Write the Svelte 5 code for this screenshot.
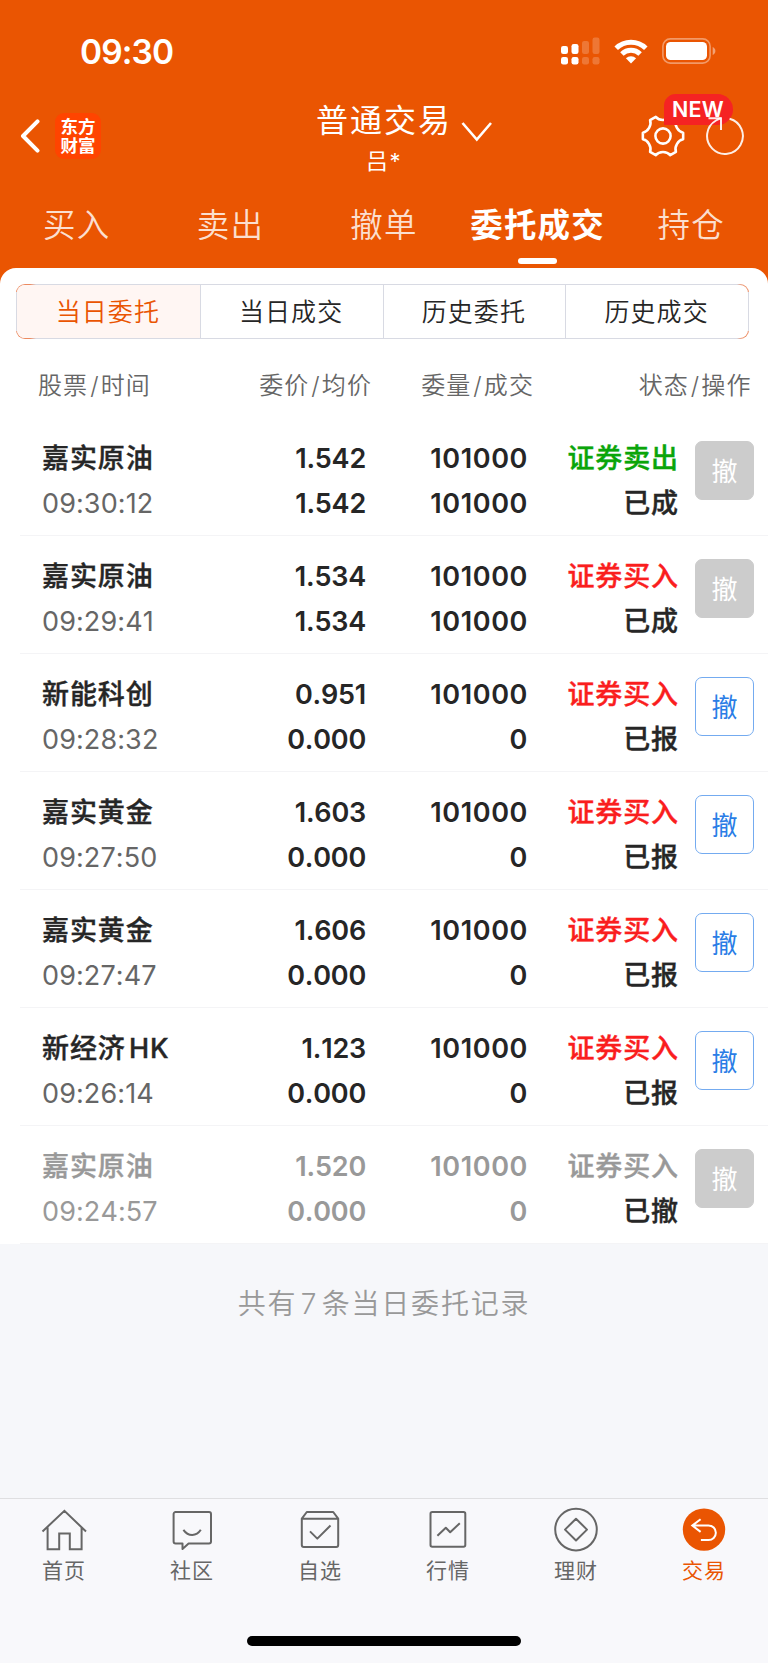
<script lang="ts">
	type Order = {
		name: string;
		time: string;
		price: string;
		avg: string;
		qty: string;
		filled: string;
		side: 'buy' | 'sell';
		status: string;
		open?: boolean;
		cancelled?: boolean;
	};

	const tabs = ['买入', '卖出', '撤单', '委托成交', '持仓'];
	const segments = ['当日委托', '当日成交', '历史委托', '历史成交'];
	const headings = [
		['股票', '时间'],
		['委价', '均价'],
		['委量', '成交'],
		['状态', '操作']
	];

	const orders: Order[] = [
		{ name: '嘉实原油', time: '09:30:12', price: '1.542', avg: '1.542', qty: '101000', filled: '101000', side: 'sell', status: '已成' },
		{ name: '嘉实原油', time: '09:29:41', price: '1.534', avg: '1.534', qty: '101000', filled: '101000', side: 'buy', status: '已成' },
		{ name: '新能科创', time: '09:28:32', price: '0.951', avg: '0.000', qty: '101000', filled: '0', side: 'buy', status: '已报', open: true },
		{ name: '嘉实黄金', time: '09:27:50', price: '1.603', avg: '0.000', qty: '101000', filled: '0', side: 'buy', status: '已报', open: true },
		{ name: '嘉实黄金', time: '09:27:47', price: '1.606', avg: '0.000', qty: '101000', filled: '0', side: 'buy', status: '已报', open: true },
		{ name: '新经济HK', time: '09:26:14', price: '1.123', avg: '0.000', qty: '101000', filled: '0', side: 'buy', status: '已报', open: true },
		{ name: '嘉实原油', time: '09:24:57', price: '1.520', avg: '0.000', qty: '101000', filled: '0', side: 'buy', status: '已撤', cancelled: true }
	];

	const nav = [
		{ id: 'home', label: '首页' },
		{ id: 'community', label: '社区' },
		{ id: 'watchlist', label: '自选' },
		{ id: 'market', label: '行情' },
		{ id: 'wealth', label: '理财' },
		{ id: 'trade', label: '交易' }
	];

	let activeTab = $state('委托成交');
	let activeSegment = $state('当日委托');
	let activeNav = $state('trade');
</script>

<div class="screen">
	<header>
		<div class="status-bar">
			<span class="clock">09:30</span>
			<div class="indicators">
				<svg class="signal" width="39" height="28" viewBox="0 0 39 28" fill="#fff">
					<rect x="0" y="9" width="7" height="8" rx="2.2" />
					<rect x="0" y="20" width="7" height="7.5" rx="2.2" />
					<rect x="10.5" y="7" width="7" height="10" rx="2.2" />
					<rect x="10.5" y="20" width="7" height="7.5" rx="2.2" />
					<g opacity="0.2">
						<rect x="21" y="4" width="7" height="13" rx="2.2" />
						<rect x="21" y="20" width="7" height="7.5" rx="2.2" />
						<rect x="31.5" y="0.5" width="7" height="16.5" rx="2.2" />
						<rect x="31.5" y="20" width="7" height="7.5" rx="2.2" />
					</g>
				</svg>
				<svg class="wifi" width="34" height="25" viewBox="0 0 34 25" fill="none" stroke="#fff" stroke-width="5">
					<path d="M2.2 9.2a21.2 21.2 0 0 1 29.6 0" />
					<path d="M7.9 15a13.2 13.2 0 0 1 18.2 0" />
					<path d="M17 24.5l-5.1-5.2a7.4 7.4 0 0 1 10.2 0z" fill="#fff" stroke="none" />
				</svg>
				<svg class="battery" width="54" height="26" viewBox="0 0 54 26">
					<rect x="0.9" y="0.9" width="47.2" height="24.2" rx="7.4" fill="none" stroke="#fff" stroke-opacity="0.4" stroke-width="1.6" />
					<rect x="4" y="4" width="41" height="18" rx="4.6" fill="#fff" />
					<path d="M50.7 9v8c3.6-1.4 3.6-6.6 0-8z" fill="#fff" fill-opacity="0.45" />
				</svg>
			</div>
		</div>

		<div class="title-bar">
			<div class="title-left">
				<svg width="20" height="36" viewBox="0 0 20 36" fill="none" stroke="#fff" stroke-width="4" stroke-linecap="round" stroke-linejoin="round">
					<path d="M17.5 3.4L3 18l14.5 14.6" />
				</svg>
				<div class="logo"><span>东方</span><span>财富</span></div>
			</div>
			<div class="title">
				<span class="account-type">普通交易</span>
				<span class="account-name">吕*</span>
			</div>
			<div class="title-right">
				<svg class="chevron" width="32" height="22" viewBox="0 0 32 22" fill="none" stroke="#fff" stroke-width="2.6">
					<path d="M1.5 2L15.8 18.6 30 2" />
				</svg>
				<div class="tools">
					<div class="settings">
						<svg width="46" height="46" viewBox="-24.2 -24.2 48.4 48.4" fill="none" stroke="#fff" stroke-width="2.7" stroke-linejoin="round">
							<path d="M7.6 20.1C4 15.8-4 15.8-7.6 20.1L-13.6 16.6C-11.7 11.4-15.7 4.4-21.2 3.5V-3.5C-15.7-4.4-11.7-11.4-13.6-16.6L-7.6-20.1C-4-15.8 4-15.8 7.6-20.1L13.6-16.6C11.7-11.4 15.7-4.4 21.2-3.5V3.5C15.7 4.4 11.7 11.4 13.6 16.6Z" />
							<circle r="8" />
						</svg>
						<span class="badge">NEW</span>
					</div>
					<svg class="refresh" width="40" height="44" viewBox="-20 -22 40 44" fill="none" stroke="#fff" stroke-opacity="0.9" stroke-width="2">
						<path d="M4.6-17.3A17.9 17.9 0 1 1-9-15.5Q-6-17.3-4-17.8" />
						<path d="M-16.5-17.8H-4V-6" />
					</svg>
				</div>
			</div>
		</div>

		<nav class="tabs">
			{#each tabs as tab}
				<button class:active={tab === activeTab} onclick={() => (activeTab = tab)}>{tab}</button>
			{/each}
		</nav>
	</header>

	<main>
		<div class="sheet">
			<div class="segments">
				{#each segments as segment}
					<button class:active={segment === activeSegment} onclick={() => (activeSegment = segment)}>{segment}</button>
				{/each}
			</div>

			<div class="columns head">
				{#each headings as [first, second]}
					<span>{first}<span class="slash">/</span>{second}</span>
				{/each}
			</div>

			{#each orders as order}
				<div class="columns row" class:cancelled={order.cancelled}>
					<div class="cell"><span class="cjk">{order.name}</span><span class="time">{order.time}</span></div>
					<div class="cell price"><span>{order.price}</span><span>{order.avg}</span></div>
					<div class="cell"><span>{order.qty}</span><span>{order.filled}</span></div>
					<div class="cell cjk">
						<span class={order.side}>{order.side === 'sell' ? '证券卖出' : '证券买入'}</span>
						<span class="state">{order.status}</span>
					</div>
					<button class="cancel" disabled={!order.open}>撤</button>
				</div>
			{/each}
		</div>
		<p class="summary">共有7条当日委托记录</p>
	</main>

	<footer>
		<nav class="bottom-nav">
			{#each nav as item}
				<button class:active={item.id === activeNav} onclick={() => (activeNav = item.id)}>
					<svg width="46" height="46" viewBox="0 0 46 46" fill="none" stroke="currentColor" stroke-width="2" stroke-linejoin="round">
						{#if item.id === 'home'}
							<path d="M1.5 24.5L23.4 3.8 45 24.5M6.6 20.6v21.6h11.6V26.4h10.6v15.8h11.8V20.6" stroke-linejoin="miter" />
						{:else if item.id === 'community'}
							<path d="M6.6 5h33.4a2 2 0 0 1 2 2v27.6a2 2 0 0 1-2 2H19.6L13.5 42v-5.4H6.6a2 2 0 0 1-2-2V7a2 2 0 0 1 2-2z" />
							<path d="M14.4 22.8c4.8 6.8 13 6.8 17.4 0" />
						{:else if item.id === 'watchlist'}
							<path d="M4.8 11.7l5-6.7h26.4l5 6.7v26.2a2 2 0 0 1-2 2H6.8a2 2 0 0 1-2-2zM4.8 11.7h36.4M13 24.4l7.3 7.2L33.5 18.5" />
						{:else if item.id === 'market'}
							<rect x="5.5" y="5" width="34.8" height="34.8" rx="1.8" />
							<path d="M12.4 28.7l8.4-8 4.4 4.6 9.6-9.1" />
						{:else if item.id === 'wealth'}
							<circle cx="23" cy="22.6" r="20.8" />
							<path d="M23 11.7l11 10.9-11 10.9-11-10.9z" />
						{:else}
							<circle cx="23" cy="22.6" r="21.2" fill="currentColor" stroke="none" />
							<path d="M19.6 12.3l-8.3 6.3 8.3 6.3M11.3 18.4h16.2a7.3 7.3 0 0 1 0 14.7h-7.6" stroke="#fff" stroke-linejoin="miter" />
						{/if}
					</svg>
					<span>{item.label}</span>
				</button>
			{/each}
		</nav>
		<div class="home-indicator"></div>
	</footer>
</div>

<style>
	:global(body) {
		margin: 0;
	}

	.screen {
		display: flex;
		flex-direction: column;
		width: 768px;
		height: 1663px;
		background: #f6f7fa;
		color: #262626;
		font-family: Inter, 'Noto Sans CJK SC', sans-serif;
		text-autospace: normal;
		overflow: hidden;
	}

	button {
		margin: 0;
		padding: 0;
		border: 0;
		background: none;
		color: inherit;
		font: inherit;
		letter-spacing: inherit;
	}

	svg {
		display: block;
		flex: none;
	}

	header {
		height: 284px;
		margin-bottom: -16px;
		background: #ea5502;
		color: #fff;
	}

	.status-bar {
		display: flex;
		justify-content: space-between;
		align-items: center;
		height: 102px;
		box-sizing: border-box;
		padding: 0 52px 0 80px;
	}

	.clock {
		padding-top: 1px;
		font-size: 33.5px;
		font-weight: 600;
		letter-spacing: -0.9px;
	}

	.indicators {
		display: flex;
		align-items: center;
	}

	.wifi {
		margin: 0 14px 0 14px;
	}

	.title-bar {
		display: grid;
		grid-template-columns: 1fr auto 1fr;
		height: 74px;
	}

	.title-left {
		display: flex;
		align-items: center;
		gap: 15px;
		height: 68px;
		padding-left: 20px;
	}

	.logo {
		display: flex;
		flex-direction: column;
		justify-content: center;
		width: 46px;
		height: 46px;
		border-radius: 9px;
		background: #ff4400;
		font-size: 17.5px;
		font-weight: 700;
		line-height: 19px;
		text-align: center;
	}

	.title {
		display: flex;
		flex-direction: column;
		align-items: center;
	}

	.account-type {
		font-size: 32px;
		letter-spacing: 2px;
		line-height: 38px;
	}

	.account-name {
		font-size: 22px;
		letter-spacing: 1.5px;
		line-height: 42px;
	}

	.title-right {
		display: flex;
		justify-content: space-between;
		height: 68px;
	}

	.chevron {
		margin: 19px 0 0 9px;
	}

	.tools {
		display: flex;
		align-items: center;
		gap: 19px;
		padding-right: 23.5px;
	}

	.settings {
		position: relative;
	}

	.badge {
		position: absolute;
		top: -19px;
		left: 24px;
		width: 69px;
		height: 31px;
		border-radius: 12px 16px 16px 0;
		background: #f52323;
		font-size: 21.5px;
		font-weight: 600;
		line-height: 30px;
		letter-spacing: 0.2px;
		text-align: center;
	}

	.refresh {
		position: relative;
	}

	.tabs {
		display: grid;
		grid-template-columns: repeat(5, 1fr);
		height: 92px;
	}

	.tabs button {
		display: flex;
		flex-direction: column;
		align-items: center;
		padding-top: 24px;
		color: rgba(255, 255, 255, 0.82);
		font-size: 32.5px;
		font-weight: 350;
		letter-spacing: 1.2px;
		line-height: 52px;
	}

	.tabs .active {
		color: #fff;
		font-weight: 700;
	}

	.tabs .active::after {
		content: '';
		width: 39px;
		height: 6px;
		margin-top: 6px;
		border-radius: 3px;
		background: #fff;
	}

	main {
		flex: 1;
	}

	.sheet {
		border-radius: 16px 16px 0 0;
		background: #fff;
		overflow: hidden;
	}

	/* grey outline whose rounded corners pick up the brand colour */
	.segments {
		display: grid;
		grid-template-columns: repeat(4, 1fr);
		height: 55px;
		margin: 16px 19px 0 16px;
		box-sizing: border-box;
		border: 1px solid transparent;
		border-radius: 9px;
		background:
			linear-gradient(#fff, #fff) padding-box,
			linear-gradient(#d8dae3, #d8dae3) center / 100% calc(100% - 16px) no-repeat border-box,
			linear-gradient(90deg, #ec8a60 14px, #d8dae3 20px, #d8dae3 calc(100% - 12px), #ec8a60 calc(100% - 7px)) border-box;
		overflow: hidden;
	}

	.segments button {
		padding: 0 1px 3px 0;
		font-size: 25px;
		font-weight: 350;
		letter-spacing: 1.1px;
	}

	.segments button + button {
		border-left: 1px solid #d8dae3;
	}

	.segments .active {
		background: #fff6f3;
		color: #ea5502;
	}

	.columns {
		display: grid;
		grid-template-columns: 171px 154px 161px 151px 75px;
	}

	.head {
		height: 79px;
		box-sizing: border-box;
		padding: 0 16px 0 38px;
		color: #666;
		font-size: 24px;
		font-weight: 350;
		letter-spacing: 1.1px;
		line-height: 93px;
	}

	.slash {
		margin: 0 1px 0 2px;
	}

	.head > :nth-child(2) {
		margin-right: -9px;
		text-align: right;
	}

	.head > :nth-child(3) {
		margin-right: -10px;
		text-align: right;
	}

	.head > :last-child {
		grid-column: 4 / 6;
		margin-right: -1.5px;
		text-align: right;
	}

	.row {
		height: 118px;
		box-sizing: border-box;
		margin-left: 20px;
		padding: 17px 14px 0 22px;
		border-bottom: 1px solid #f4f4f6;
	}

	.cell {
		display: flex;
		flex-direction: column;
		padding-top: 0.5px;
		font-size: 27px;
		font-weight: 600;
		font-kerning: none;
		line-height: 45px;
		letter-spacing: 0.6px;
		text-align: right;
	}

	.price {
		padding-right: 1px;
		letter-spacing: -0.2px;
	}

	.cell:first-child {
		text-align: left;
	}

	/* halfway between the medium and bold cuts */
	.cjk {
		font-weight: 500;
		letter-spacing: 0.9px;
		-webkit-text-stroke: 0.4px currentColor;
	}

	.cell .time {
		color: #666;
		font-weight: 400;
		letter-spacing: 0.1px;
	}

	.buy {
		color: #fa1e1e;
	}

	.sell {
		color: #0aa50a;
	}

	.cancelled .cell,
	.cancelled .time,
	.cancelled .buy {
		color: #999;
	}

	.cancelled .state {
		color: #262626;
	}

	.cancel {
		justify-self: end;
		width: 59px;
		height: 59px;
		margin-top: 6px;
		padding-bottom: 3px;
		box-sizing: border-box;
		border: 1.5px solid #74abf0;
		border-radius: 7px;
		color: #2a7de6;
		font-size: 26px;
		letter-spacing: 0;
	}

	.cancel:disabled {
		border-color: #ccc;
		background: #ccc;
		color: #fff;
	}

	.summary {
		margin: 0;
		color: #999;
		font-size: 28px;
		font-weight: 350;
		letter-spacing: 1.8px;
		line-height: 121px;
		text-align: center;
	}

	footer {
		height: 165px;
		box-sizing: border-box;
		border-top: 1px solid #dfdfe1;
		background: #f8f8fb;
	}

	.bottom-nav {
		display: grid;
		grid-template-columns: repeat(6, 1fr);
		height: 137px;
	}

	.bottom-nav button {
		display: flex;
		flex-direction: column;
		align-items: center;
		padding-top: 8px;
		color: #666;
		font-size: 21px;
		letter-spacing: 1px;
		line-height: 36px;
	}

	.bottom-nav .active {
		color: #ea5502;
	}

	.home-indicator {
		width: 274px;
		height: 10px;
		margin: 0 auto;
		border-radius: 5px;
		background: #000;
	}
</style>
